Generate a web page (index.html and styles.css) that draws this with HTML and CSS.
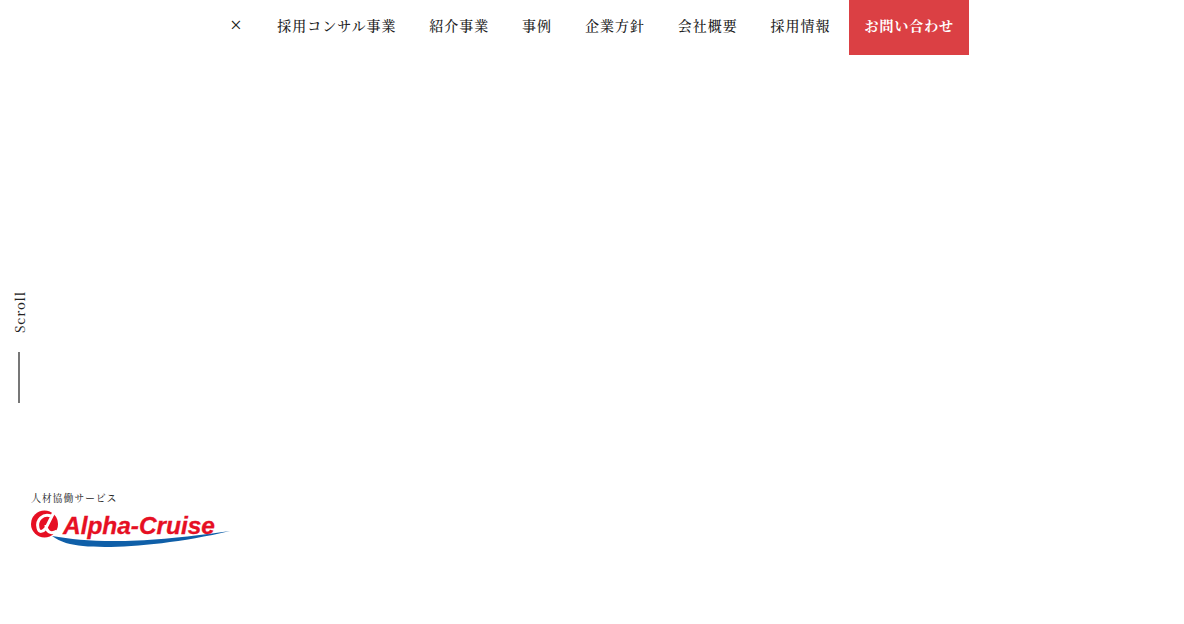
FILE: index.html
```html
<!DOCTYPE html>
<html lang="ja">
<head>
  <meta charset="UTF-8" />
  <title>Alpha-Cruise</title>
  <link rel="stylesheet" href="styles.css">
</head>
<body>
  <header class="site-header">
    <nav class="global-nav">
      <a class="nav-close">×</a>
      <a class="nav-link">採用コンサル事業</a>
      <a class="nav-link">紹介事業</a>
      <a class="nav-link">事例</a>
      <a class="nav-link">企業方針</a>
      <a class="nav-link">会社概要</a>
      <a class="nav-link">採用情報</a>
      <a class="nav-contact">お問い合わせ</a>
    </nav>
  </header>

  <main class="hero">
    <div class="scroll-hint">
      <span class="scroll-text">Scroll</span>
      <span class="scroll-line"></span>
    </div>

    <div class="brand">
      <p class="brand-tag">人材協働サービス</p>
      <svg class="brand-logo" width="200" height="38" viewBox="0 0 200 38">
        <path d="M21 26 C60 33 110 34 199 21 C140 35 82 39 52 36 C40 35 29 32 21 26 Z" fill="#0f5fa8"/>
        <circle cx="13.500" cy="14" r="13.500" fill="#e60f23"/>
        <path d="M20 6 C12 3 5 10 7 18 C8 23 12 22 15 18 L23 2 M15 15 C15 21 19 25 26 21" fill="none" stroke="#fff" stroke-width="3"/>
        <text x="32" y="23.500" textLength="152" class="logo-text">Alpha-Cruise</text>
      </svg>
    </div>
  </main>
</body>
</html>
```

FILE: styles.css
```css
* {
  box-sizing: border-box;
}

body {
  margin: 0;
  height: 624px;
  overflow: hidden;
  background: #fff;
  color: #222;
  font-family: "Noto Serif CJK JP", "Noto Sans CJK JP", serif;
}

.site-header {
  height: 55px;
  padding-left: 220px;
}

.global-nav {
  display: flex;
  align-items: center;
  height: 55px;
}

.nav-close {
  width: 57.200px;
  padding: 0 0 6px 10px;
  font-family: "Liberation Serif", serif;
  font-size: 21px;
  line-height: 20px;
}

.nav-link {
  margin-right: 32.800px;
  padding-bottom: 6px;
  font-size: 14px;
  font-weight: 500;
  letter-spacing: 1px;
  white-space: nowrap;
}

.nav-contact {
  display: flex;
  align-items: center;
  width: 120px;
  height: 55px;
  margin-left: -14.200px;
  padding: 0 0 6px 15.500px;
  background: #db4044;
  color: #fff;
  font-size: 14px;
  font-weight: 700;
  letter-spacing: 0.900px;
  white-space: nowrap;
}

.hero {
  height: 569px;
  padding-top: 236px;
}

.scroll-hint {
  display: flex;
  flex-direction: column;
  align-items: flex-start;
  gap: 19px;
  padding-left: 12px;
}

.scroll-text {
  writing-mode: vertical-rl;
  transform: rotate(180deg);
  font-size: 13px;
  font-weight: 500;
  letter-spacing: 0.800px;
  line-height: 16px;
}

.scroll-line {
  width: 2px;
  height: 51px;
  margin-left: 6px;
  background: #777;
}

.brand {
  margin-top: 88px;
  padding-left: 31px;
}

.brand-tag {
  margin: 0 0 5px;
  font-size: 10px;
  line-height: 14px;
  letter-spacing: 0.800px;
}

.brand-logo {
  display: block;
}

.logo-text {
  font-family: "Liberation Sans", sans-serif;
  font-size: 24.500px;
  font-weight: 700;
  font-style: italic;
  fill: #e60f23;
  stroke: #e60f23;
  stroke-width: 0.300px;
}
```
